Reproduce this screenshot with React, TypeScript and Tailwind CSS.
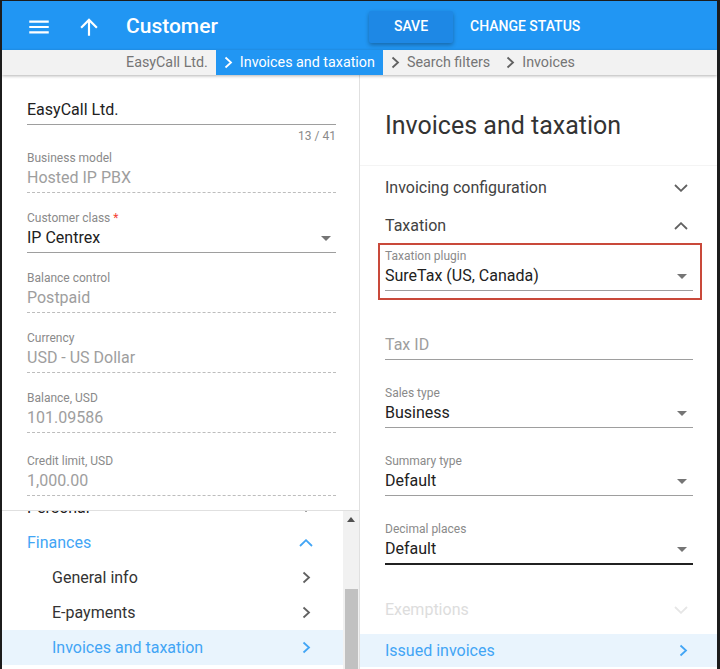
import React from 'react';

const ChevronRight = ({ className = '' }: { className?: string }) => (
  <svg width="9" height="13" viewBox="0 0 9 13" className={className}>
    <polyline points="1.5,1.5 7,6.5 1.5,11.5" fill="none" stroke="currentColor" strokeWidth="1.8" />
  </svg>
);

const ChevronUp = ({ className = '' }: { className?: string }) => (
  <svg width="14" height="8" viewBox="0 0 14 8" className={className}>
    <polyline points="1,7 7,1.2 13,7" fill="none" stroke="currentColor" strokeWidth="1.8" />
  </svg>
);

const ChevronDown = ({ className = '' }: { className?: string }) => (
  <svg width="14" height="8" viewBox="0 0 14 8" className={className}>
    <polyline points="1,1 7,6.8 13,1" fill="none" stroke="currentColor" strokeWidth="1.8" />
  </svg>
);

const Caret = () => (
  <svg width="10" height="5" viewBox="0 0 10 5" className="text-[#757575]">
    <polygon points="0,0 10,0 5,5" fill="currentColor" />
  </svg>
);

type FieldProps = {
  label: string;
  value: string;
  kind: 'ro' | 'select' | 'empty';
  required?: boolean;
  focused?: boolean;
  className?: string;
  caretClass?: string;
};

const Field = ({ label, value, kind, required, focused, className = '', caretClass = 'mr-[5px]' }: FieldProps) => {
  let line = 'h-[27px] pb-[2px] border-b border-[#9e9e9e]';
  if (kind === 'ro') line = 'h-[27px] pb-[2px] border-b border-dashed border-[#bdbdbd]';
  if (focused) line = 'h-[28px] pb-[2px] border-b-2 border-[#212121]';
  const valueColor = kind === 'select' ? 'text-[#212121]' : 'text-[#9e9e9e]';
  return (
    <div className={className}>
      <div className="h-4 text-[12px] leading-4 text-[#8a8a8a] whitespace-nowrap">
        {label}
        {required && <span className="text-[#f44336]"> *</span>}
      </div>
      <div className={`flex items-center justify-between ${line}`}>
        <span className={`text-[16px] leading-6 ${valueColor}`}>{value}</span>
        {kind === 'select' && (
          <span className={caretClass}>
            <Caret />
          </span>
        )}
      </div>
    </div>
  );
};

const Crumb = ({ text, first, active }: { text: string; first?: boolean; active?: boolean }) => (
  <div className={`flex items-center px-2 ${active ? 'bg-[#2196f3] text-white' : 'text-[#757575]'}`}>
    {!first && <ChevronRight className={`mr-[7px] ${active ? 'text-white' : 'text-[#616161]'}`} />}
    <span className="text-[14.3px] leading-none">{text}</span>
  </div>
);

const NavItem = ({
  text,
  indent,
  color,
  active,
  up,
  down,
}: {
  text: string;
  indent?: boolean;
  color: string;
  active?: boolean;
  up?: boolean;
  down?: boolean;
}) => (
  <div
    className={`flex h-[35px] items-center justify-between pr-[30px] ${indent ? 'pl-[50px]' : 'pl-[25px]'} ${
      active ? 'bg-[#e9f4fd]' : ''
    }`}
  >
    <span className={`text-[16px] ${color}`}>{text}</span>
    <span className={`flex w-[14px] justify-center ${up || active ? 'text-[#42a5f5]' : 'text-[#616161]'}`}>
      {up ? <ChevronUp /> : down ? <ChevronDown /> : <ChevronRight />}
    </span>
  </div>
);

export default function App() {
  return (
    <div className="relative flex h-[669px] w-[720px] flex-col overflow-hidden border-x-2 border-r-[3px] border-t border-[#1c1c1c] bg-white font-['Roboto',sans-serif]">
      {/* top bar */}
      <header className="flex h-[49px] shrink-0 items-center bg-[#2196f3] pt-[2px] text-white">
        <svg width="26" height="26" viewBox="0 0 24 24" className="ml-[24px]" fill="currentColor">
          <path d="M3 18h18v-2H3v2zm0-5h18v-2H3v2zm0-7v2h18V6H3z" />
        </svg>
        <svg width="26" height="26" viewBox="0 0 24 24" className="ml-[24px]" fill="currentColor">
          <path d="M4 12l1.41 1.41L11 7.83V20h2V7.83l5.58 5.59L20 12l-8-8-8 8z" />
        </svg>
        <span className="ml-[24px] w-[243px] text-[21px] font-medium">Customer</span>
        <button className="h-[32px] w-[84px] rounded-[2px] bg-[#1e88e5] text-[14px] font-medium shadow-[0_2px_4px_rgba(0,0,0,0.3)]">
          SAVE
        </button>
        <span className="ml-[17px] text-[14px] font-medium">CHANGE STATUS</span>
      </header>

      {/* breadcrumbs */}
      <div className="relative z-10 flex h-[25px] shrink-0 items-stretch bg-[#f2f2f2] pl-[116px] shadow-[0_1px_3px_rgba(0,0,0,0.3)]">
        <Crumb text="EasyCall Ltd." first />
        <Crumb text="Invoices and taxation" active />
        <Crumb text="Search filters" />
        <Crumb text="Invoices" />
      </div>

      <div className="flex min-h-0 flex-1">
        {/* left panel */}
        <div className="flex w-[358px] shrink-0 flex-col border-r border-[#e0e0e0]">
          <div className="min-h-0 flex-1 overflow-hidden pl-[25px] pr-[23px] pt-[23px]">
            <div className="h-[27px] border-b border-[#9e9e9e] pb-[2px]">
              <span className="text-[16px] leading-6 text-[#212121]">EasyCall Ltd.</span>
            </div>
            <div className="mt-[3px] text-right text-[12px] leading-4 text-[#8a8a8a]">13 / 41</div>
            <Field className="mt-[6px]" label="Business model" value="Hosted IP PBX" kind="ro" />
            <Field className="mt-[17px]" label="Customer class" value="IP Centrex" kind="select" required />
            <Field className="mt-[17px]" label="Balance control" value="Postpaid" kind="ro" />
            <Field className="mt-[17px]" label="Currency" value="USD - US Dollar" kind="ro" />
            <Field className="mt-[17px]" label="Balance, USD" value="101.09586" kind="ro" />
            <Field className="mt-[20px]" label="Credit limit, USD" value="1,000.00" kind="ro" />
          </div>

          <div className="flex h-[159px] shrink-0 border-t border-[#e0e0e0]">
            <div className="min-w-0 flex-1 overflow-hidden">
              <div className="-mt-[21px]">
                <NavItem text="Personal" color="text-[#212121]" down />
                <NavItem text="Finances" color="text-[#42a5f5]" up />
                <NavItem text="General info" color="text-[#333333]" indent />
                <NavItem text="E-payments" color="text-[#333333]" indent />
                <NavItem text="Invoices and taxation" color="text-[#42a5f5]" indent active />
              </div>
            </div>
            <div className="flex w-[16px] shrink-0 flex-col items-center bg-[#f1f1f1]">
              <svg width="8" height="5" viewBox="0 0 8 5" className="mt-[6px] text-[#505050]">
                <polygon points="0,5 8,5 4,0" fill="currentColor" />
              </svg>
              <div className="mt-[67px] w-[13px] flex-1 bg-[#c1c1c1]" />
            </div>
          </div>
        </div>

        {/* right panel */}
        <div className="flex min-w-0 flex-1 flex-col">
          <div className="border-b border-[#f4f4f4] pb-[23px] pl-[25px] pt-[35px]">
            <h1 className="text-[25px] leading-8 text-[#333333]">Invoices and taxation</h1>
          </div>
          <div className="pl-[25px] pr-[24px]">
            <div className="mt-[2px] flex h-[40px] items-center justify-between">
              <span className="text-[16px] text-[#424242]">Invoicing configuration</span>
              <ChevronDown className="mr-[5px] text-[#616161]" />
            </div>
            <div className="flex h-[35px] items-center justify-between">
              <span className="text-[16px] text-[#424242]">Taxation</span>
              <ChevronUp className="mr-[5px] text-[#616161]" />
            </div>
            <div className="-ml-[7px] -mr-[9px] border-2 border-[#c9493a] pb-[7px] pl-[5px] pr-[7px] pt-[3px]">
              <Field label="Taxation plugin" value="SureTax (US, Canada)" kind="select" caretClass="mr-[6px]" />
            </div>
            <Field className="mt-[17px]" label="" value="Tax ID" kind="empty" />
            <Field className="mt-[25px]" label="Sales type" value="Business" kind="select" caretClass="mr-[6px]" />
            <Field className="mt-[25px]" label="Summary type" value="Default" kind="select" caretClass="mr-[6px]" />
            <Field className="mt-[25px]" label="Decimal places" value="Default" kind="select" focused caretClass="mr-[6px]" />
            <div className="mt-[28px] flex h-[34px] items-center justify-between">
              <span className="text-[16px] text-[#dddddd]">Exemptions</span>
              <ChevronDown className="mr-[5px] text-[#e6e6e6]" />
            </div>
          </div>
          <div className="mt-[7px] flex h-[33px] items-center justify-between bg-[#e9f4fd] pl-[25px] pr-[29px]">
            <span className="text-[16px] text-[#42a5f5]">Issued invoices</span>
            <ChevronRight className="text-[#42a5f5]" />
          </div>
        </div>
      </div>
    </div>
  );
}
